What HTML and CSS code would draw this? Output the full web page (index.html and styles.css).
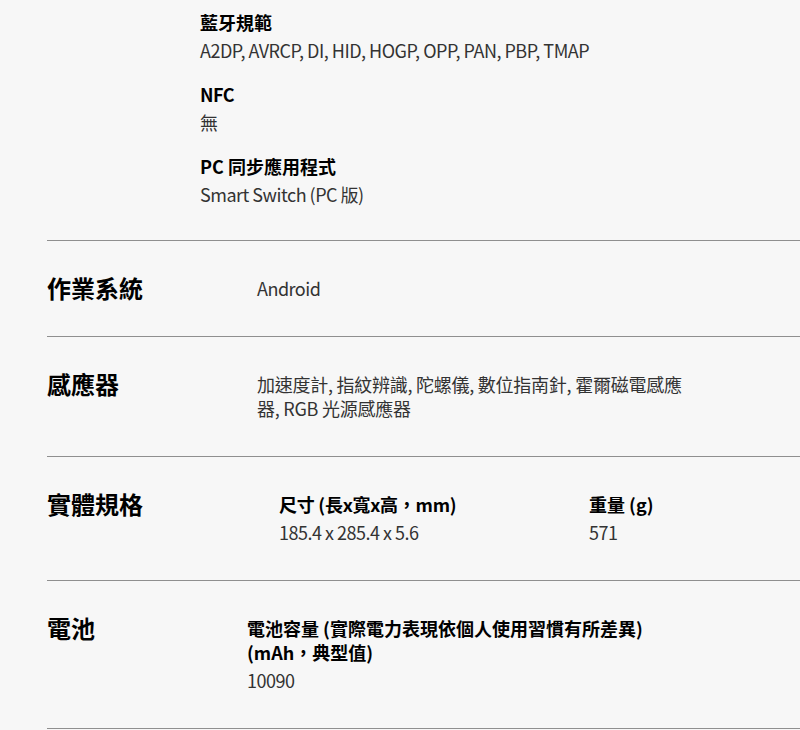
FILE: index.html
```html
<!DOCTYPE html>
<html lang="zh-Hant">
<head>
<meta charset="utf-8">
<link rel="stylesheet" href="styles.css">
</head>
<body>
<div class="page">
  <div class="connect">
    <div class="item">
      <div class="label">藍牙規範</div>
      <div class="value latin">A2DP, AVRCP, DI, HID, HOGP, OPP, PAN, PBP, TMAP</div>
    </div>
    <div class="item">
      <div class="label latin">NFC</div>
      <div class="value">無</div>
    </div>
    <div class="item">
      <div class="label">PC 同步應用程式</div>
      <div class="value latin">Smart Switch (PC 版)</div>
    </div>
  </div>

  <div class="row">
    <h2 class="heading">作業系統</h2>
    <div class="simple latin">Android</div>
  </div>

  <div class="row">
    <h2 class="heading">感應器</h2>
    <div class="simple mixed">加速度計, 指紋辨識, 陀螺儀, 數位指南針, 霍爾磁電感應器, RGB 光源感應器</div>
  </div>

  <div class="row">
    <h2 class="heading">實體規格</h2>
    <div class="specs">
      <div class="spec">
        <div class="label mixed">尺寸 (長x寬x高，mm)</div>
        <div class="value latin">185.4 x 285.4 x 5.6</div>
      </div>
      <div class="spec">
        <div class="label">重量 (g)</div>
        <div class="value latin">571</div>
      </div>
    </div>
  </div>

  <div class="row">
    <h2 class="heading">電池</h2>
    <div class="battery">
      <div class="label">電池容量 (實際電力表現依個人使用習慣有所差異) (mAh，典型值)</div>
      <div class="value latin">10090</div>
    </div>
  </div>
</div>
</body>
</html>
```

FILE: styles.css
```css
html, body {
  margin: 0;
  padding: 0;
  background: #f7f7f7;
}

body {
  font-family: "Noto Sans CJK TC", "Noto Sans", sans-serif;
  font-size: 18px;
  color: #333;
  overflow: hidden;
}

.page {
  padding-left: 47px;
}

.connect {
  padding: 10px 0 34px 153px;
  display: flex;
  flex-direction: column;
  gap: 20px;
}

.label {
  font-weight: 700;
  color: #000;
  line-height: 24px;
}

.value {
  line-height: 24px;
  margin-top: 4px;
}

.latin {
  letter-spacing: -0.5px;
}

.mixed {
  letter-spacing: -0.25px;
}

.row {
  border-top: 1px solid #8f8f8f;
  display: flex;
  align-items: flex-start;
  padding: 31px 0 36px 0;
}

.row:last-child {
  border-bottom: 1px solid #8f8f8f;
}

.heading {
  margin: 0 0 -4px 0;
  width: 210px;
  flex: none;
  font-size: 24px;
  line-height: 32px;
  font-weight: 700;
  color: #000;
}

.simple {
  padding-top: 4px;
  line-height: 24px;
  width: 436px;
}

.specs {
  padding-top: 4px;
  margin-left: 22px;
  display: grid;
  grid-template-columns: 310px 200px;
}

.battery {
  padding-top: 4px;
  margin-left: -10px;
  width: 430px;
}
```
